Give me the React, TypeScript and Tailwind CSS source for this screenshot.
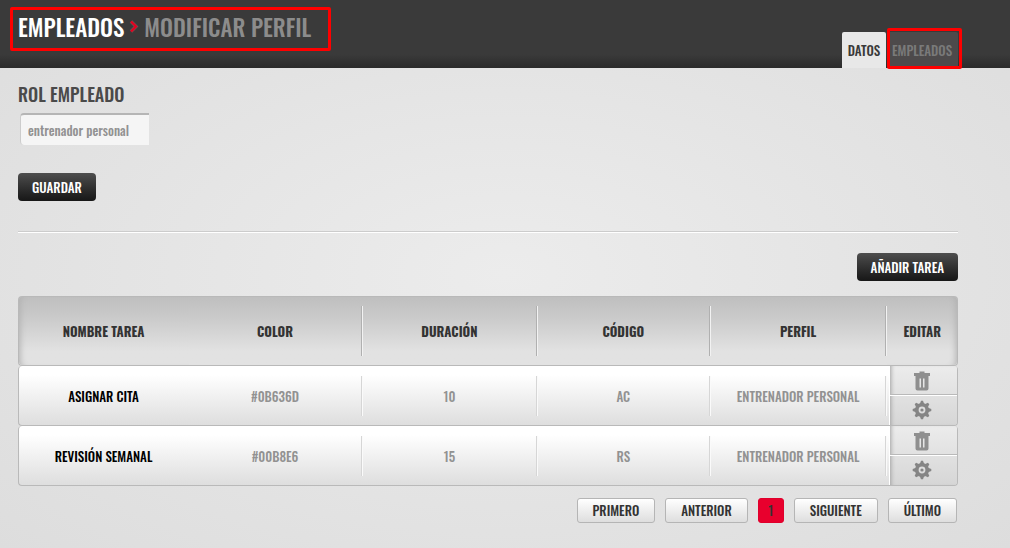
import { useState } from "react"

const COLUMNS = [
  { key: "nombre", label: "Nombre tarea", width: "w-[18.2%]" },
  { key: "color", label: "Color", width: "w-[18.5%]" },
  { key: "duracion", label: "Duración", width: "w-[18.6%]" },
  { key: "codigo", label: "Código", width: "w-[18.4%]" },
  { key: "perfil", label: "Perfil", width: "w-[18.8%]" },
]

const TASKS = [
  { nombre: "Asignar cita", color: "#0B636D", duracion: "10", codigo: "AC", perfil: "Entrenador personal" },
  { nombre: "Revisión semanal", color: "#00B8E6", duracion: "15", codigo: "RS", perfil: "Entrenador personal" },
]

const PAGES = ["Primero", "Anterior", "1", "Siguiente", "Último"]

function TrashIcon() {
  return (
    <svg width="18" height="20" viewBox="0 0 18 20" fill="#8f8f8f" aria-hidden="true">
      <path
        fillRule="evenodd"
        d="M6.500 0.500h5v1.500h5.500v3H1V2h5.500zM2.500 5h13v12.500a2 2 0 0 1-2 2h-9a2 2 0 0 1-2-2zM6.500 7.500v9h1.500v-9zM10 7.500v9h1.500v-9z"
      />
    </svg>
  )
}

function GearIcon() {
  return (
    <svg width="20" height="20" viewBox="0 0 20 20" fill="#858585" aria-hidden="true">
      {[0, 45, 90, 135, 180, 225, 270, 315].map((angle) => (
        <path key={angle} d="M7.600 4.500L9 0.700h2l1.400 3.800z" transform={`rotate(${angle} 10 10)`} />
      ))}
      <path
        fillRule="evenodd"
        d="M10 3a7 7 0 1 0 0 14a7 7 0 0 0 0-14zM10 6.600a3.400 3.400 0 1 1 0 6.800a3.400 3.400 0 0 1 0-6.800z"
      />
      <circle cx="10" cy="10" r="1.600" />
    </svg>
  )
}

function DarkButton({ children }: { children: string }) {
  return (
    <button
      type="button"
      className="h-7 cursor-pointer rounded bg-linear-to-b from-[#4e4e4e] to-[#171717] px-[14px] pt-px text-[13px] font-medium uppercase text-white"
    >
      {children}
    </button>
  )
}

function Header() {
  return (
    <header className="flex h-[68px] items-end justify-between bg-linear-to-b from-[#3a3a3a] from-80% to-[#2b2b2b] pr-[52px] pl-[18px]">
      <h1 className="relative flex items-center gap-[5px] self-start pt-3 text-[23px] leading-[30px] font-medium uppercase text-white">
        Empleados
        <svg width="10" height="14" viewBox="0 0 10 14" fill="none" aria-hidden="true">
          <path d="M2 1.500l5 5l-5 5" stroke="#6b5555" strokeWidth="3.500" />
          <path d="M2 1.500l5 5l-5 5" stroke="#e3001f" strokeWidth="2.200" />
        </svg>
        <span className="text-[#8c8c8c]">Modificar perfil</span>
        <span className="pointer-events-none absolute top-[7px] -right-5 -bottom-[9px] -left-2 rounded-xs border-3 border-[#ff0000]" />
      </h1>
      <nav className="flex h-9 gap-[2px] text-[13px] font-medium uppercase">
        <a href="#datos" className="flex w-11 items-center justify-center rounded-t-xs bg-[#e8e8e8] pt-px text-[#3a3a3a]">
          Datos
        </a>
        <a href="#empleados" className="relative flex w-[70px] items-center rounded-t-xs bg-[#4d4a4b] pt-px pl-1 text-[#7a7a7a]">
          Empleados
          <span className="pointer-events-none absolute -top-1 -right-1 -bottom-px -left-px rounded-xs border-3 border-[#ff0000]" />
        </a>
      </nav>
    </header>
  )
}

function TaskTable() {
  return (
    <table className="mt-[15px] w-full table-fixed border-separate border-spacing-0 text-center text-[13px] font-medium uppercase">
      <thead>
        <tr>
          {COLUMNS.map((col, i) => (
            <th
              key={col.key}
              className={`${col.width} h-[70px] border-y border-[#b9b9b9] bg-linear-to-b from-[#bfbfbf] via-[#cacaca] via-30% to-[#e2e2e2] to-80% p-0 font-bold text-[#333] first:rounded-l first:border-l first:shadow-[inset_6px_0_6px_-5px_#b0b0b0]`}
            >
              <div className={`mr-px flex h-[50px] items-center justify-center pt-px ${i > 0 ? "border-r border-[#b0b0b0] shadow-[1px_0_#f2f2f2]" : ""}`}>
                {col.label}
              </div>
            </th>
          ))}
          <th className="rounded-r border-y border-r border-[#b9b9b9] bg-linear-to-b from-[#bfbfbf] via-[#cacaca] via-30% to-[#e2e2e2] to-80% p-0 font-bold text-[#333] shadow-[inset_-6px_0_6px_-5px_#b0b0b0]">
            <div className="pt-px">Editar</div>
          </th>
        </tr>
      </thead>
      <tbody>
        {TASKS.map((task) => (
          <tr key={task.nombre}>
            {COLUMNS.map((col, i) => (
              <td
                key={col.key}
                className="h-[60px] border-b border-[#b9b9b9] bg-linear-to-b from-white from-15% to-[#dedede] p-0 text-[#929292] first:rounded-l first:border-l first:text-black"
              >
                <div className={`mr-px flex h-10 items-center justify-center pt-[2px] ${i > 0 ? "border-r border-[#d6d6d6] shadow-[1px_0_#fafafa]" : ""}`}>
                  {task[col.key as keyof typeof task]}
                </div>
              </td>
            ))}
            <td className="h-[60px] rounded-r border-r border-b border-[#b9b9b9] bg-linear-to-b from-white from-15% to-[#dedede] p-0">
              <div className="ml-[2px] flex flex-col rounded-r-[3px] border-l border-white bg-linear-to-b from-[#ececec] to-[#d6d6d6] shadow-[inset_4px_0_4px_-3px_#a0a0a0]">
                <button
                  type="button"
                  aria-label="Eliminar"
                  className="flex h-[29px] cursor-pointer items-center justify-center border-b border-[#b9b9b9] pt-[2px] pr-[3px]"
                >
                  <TrashIcon />
                </button>
                <button
                  type="button"
                  aria-label="Configurar"
                  className="flex h-[30px] cursor-pointer items-center justify-center border-t border-white pr-[3px] pb-[2px]"
                >
                  <GearIcon />
                </button>
              </div>
            </td>
          </tr>
        ))}
      </tbody>
    </table>
  )
}

function App() {
  const [role, setRole] = useState("entrenador personal")

  return (
    <div className="min-h-screen bg-[radial-gradient(ellipse_at_center,#ececec,#dddddd)] font-['Oswald','Liberation_Sans_Narrow','Roboto_Condensed','Liberation_Sans',sans-serif]">
      <Header />
      <main className="pt-3 pr-[52px] pb-6 pl-[18px]">
        <label htmlFor="rol" className="block text-lg leading-7 font-medium uppercase text-[#4a4a4a]">
          Rol empleado
        </label>
        <input
          id="rol"
          type="text"
          value={role}
          onChange={(e) => setRole(e.target.value)}
          className="mt-[5px] ml-[2px] block h-8 w-[129px] rounded-l border-t-2 border-l border-t-[#b5b5b5] border-l-[#cccccc] bg-[#f5f5f5] px-[7px] pb-px text-[13px] font-medium text-[#929292] outline-none"
        />
        <div className="mt-7 border-b border-[#cccccc] pb-[30px] shadow-[0_1px_white]">
          <DarkButton>Guardar</DarkButton>
        </div>
        <div className="mt-[21px] flex justify-end">
          <DarkButton>Añadir tarea</DarkButton>
        </div>
        <TaskTable />
        <nav aria-label="Paginación" className="mt-3 mr-px flex justify-end gap-[10px] text-[13px] font-medium uppercase">
          {PAGES.map((page) => (
            <button
              key={page}
              type="button"
              className={`h-[25px] cursor-pointer rounded-[3px] border pt-px text-[#333] uppercase ${
                page === "1" ? "w-[26px] border-[#e0002c] bg-[#e8002d]" : "border-[#b5b5b5] bg-linear-to-b from-white to-[#dedede] px-[15px]"
              }`}
            >
              {page}
            </button>
          ))}
        </nav>
      </main>
    </div>
  )
}

export default App
